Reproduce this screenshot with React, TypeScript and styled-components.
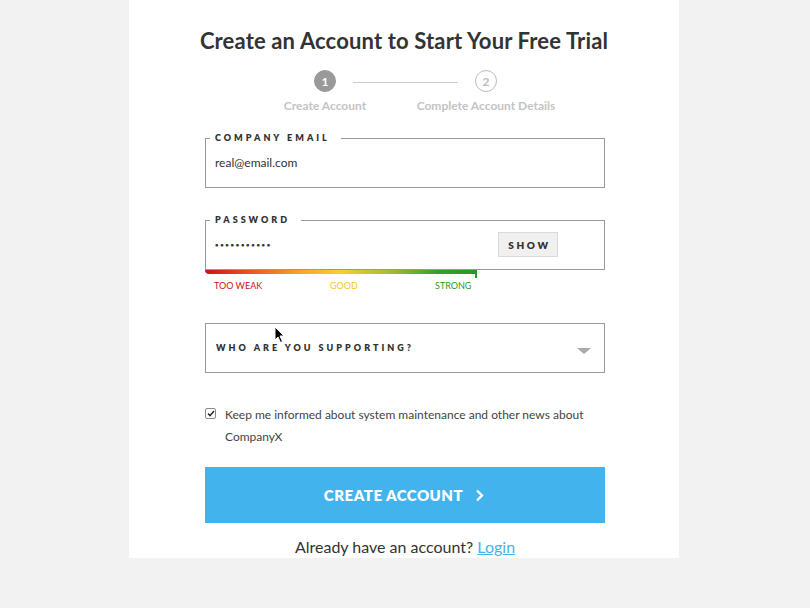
import React from "react";
import styled, { createGlobalStyle } from "styled-components";

const GlobalStyle = createGlobalStyle`
  html, body {
    margin: 0;
    padding: 0;
    background: #f2f2f2;
    font-family: Lato, "Open Sans", Arial, sans-serif;
  }
`;

const Page = styled.div`
  position: relative;
  width: 810px;
  height: 608px;
  overflow: hidden;
`;

const Card = styled.div`
  width: 550px;
  margin: 0 0 0 129px;
  background: #fff;
  padding: 28px 0 1px;
  box-sizing: border-box;
  display: flex;
  flex-direction: column;
  align-items: center;
`;

const Title = styled.h1`
  margin: 0;
  font-size: 22px;
  line-height: 26px;
  font-weight: 700;
  letter-spacing: 0.15px;
  color: #333;
`;

const Stepper = styled.div`
  display: flex;
  align-items: flex-start;
  margin: 16px 0 0 3px;
`;

const Step = styled.div`
  display: flex;
  flex-direction: column;
  align-items: center;
  width: 22px;
`;

const Circle = styled.div<{ $active?: boolean }>`
  width: 22px;
  height: 22px;
  border-radius: 50%;
  box-sizing: border-box;
  display: flex;
  align-items: center;
  justify-content: center;
  font-size: 12px;
  font-weight: 700;
  background: ${(p) => (p.$active ? "#999" : "#fff")};
  color: ${(p) => (p.$active ? "#fff" : "#bbb")};
  border: 1px solid ${(p) => (p.$active ? "#999" : "#bbb")};
`;

const StepLabel = styled.div`
  margin-top: 7px;
  font-size: 12px;
  line-height: 14px;
  font-weight: 700;
  color: #c4c4c4;
  white-space: nowrap;
`;

const Connector = styled.div`
  width: 105px;
  height: 1px;
  background: #ccc;
  margin: 12px 17px 0;
  flex: none;
`;

const Form = styled.div`
  width: 400px;
  display: flex;
  flex-direction: column;
  margin: 19px 0 0 2px;
`;

const Field = styled.fieldset<{ $gap?: number }>`
  margin: ${(p) => p.$gap ?? 0}px 0 0;
  padding: 0 0 6px 4px;
  border: 1px solid #999;
  min-width: 0;
`;

const Legend = styled.legend`
  padding: 0 11px 0 5px;
  font-size: 9px;
  line-height: 12px;
  font-weight: 800;
  letter-spacing: 3px;
  color: #333;
`;

const FieldRow = styled.div`
  height: 37px;
  display: flex;
  align-items: center;
  justify-content: space-between;
  padding-left: 5px;
`;

const Value = styled.span`
  font-size: 12px;
  color: #333;
`;

const Dots = styled.span`
  font-size: 6px;
  letter-spacing: 1.7px;
  color: #333;
  font-weight: 700;
`;

const ShowButton = styled.button`
  width: 60px;
  height: 25px;
  margin-right: 46px;
  background: #f0f0f0;
  border: 1px solid #dadada;
  font-family: inherit;
  font-size: 10px;
  font-weight: 800;
  letter-spacing: 2.6px;
  padding: 0 0 0 3px;
  color: #333;
`;

const MeterTrack = styled.div`
  position: relative;
  width: 272px;
  height: 4px;
  border-radius: 0 0 0 5px;
  background: linear-gradient(
    to right,
    #d0111b 0%,
    #ee5a1e 18%,
    #f6a528 35%,
    #f8cf2f 50%,
    #a6bd33 68%,
    #37a02a 85%,
    #249a22 100%
  );
`;

const MeterTick = styled.div`
  position: absolute;
  right: 0;
  top: 0;
  width: 2px;
  height: 8px;
  background: #249a22;
`;

const MeterLabels = styled.div`
  display: grid;
  grid-template-columns: 116px 105px auto;
  padding-left: 9px;
  margin-top: 6px;
  font-size: 9px;
  line-height: 12px;
`;

const MeterLabel = styled.span<{ $color: string }>`
  color: ${(p) => p.$color};
`;

const Select = styled.div`
  margin-top: 31px;
  height: 50px;
  box-sizing: border-box;
  border: 1px solid #999;
  display: flex;
  align-items: center;
  justify-content: space-between;
  padding: 0 13px 0 10px;
`;

const SelectText = styled.span`
  font-size: 9px;
  font-weight: 800;
  letter-spacing: 3px;
  color: #333;
  margin-top: -2px;
`;

const Caret = styled.span`
  width: 0;
  height: 0;
  border-left: 7px solid transparent;
  border-right: 7px solid transparent;
  border-top: 6px solid #aaa;
  margin-top: 6px;
`;

const CheckRow = styled.label`
  display: flex;
  align-items: flex-start;
  gap: 9px;
  margin-top: 31px;
`;

const Box = styled.span`
  width: 11px;
  height: 11px;
  flex: none;
  box-sizing: border-box;
  border: 1px solid #8a8a8a;
  border-radius: 2px;
  background: #fff;
  margin-top: 4px;
  display: flex;
  align-items: center;
  justify-content: center;
`;

const CheckText = styled.span`
  font-size: 12px;
  line-height: 22px;
  color: #444;
`;

const SubmitButton = styled.button`
  margin-top: 19px;
  height: 56px;
  border: none;
  background: #42b3ed;
  color: #fff;
  font-family: inherit;
  font-size: 15px;
  font-weight: 800;
  letter-spacing: 0.5px;
  display: flex;
  align-items: center;
  justify-content: center;
  gap: 12px;
  padding: 0 2px 0 0;
`;

const Footer = styled.div`
  margin-top: 14px;
  font-size: 16px;
  line-height: 20px;
  color: #333;
  text-align: center;
`;

const LoginLink = styled.a`
  color: #4ab2ea;
  text-decoration: underline;
`;

const Cursor = styled.svg`
  position: absolute;
  left: 274px;
  top: 326px;
`;

export default function App() {
  return (
    <Page>
      <GlobalStyle />
      <Card>
        <Title>Create an Account to Start Your Free Trial</Title>
        <Stepper>
          <Step>
            <Circle $active>1</Circle>
            <StepLabel>Create Account</StepLabel>
          </Step>
          <Connector />
          <Step>
            <Circle>2</Circle>
            <StepLabel>Complete Account Details</StepLabel>
          </Step>
        </Stepper>
        <Form>
          <Field>
            <Legend>COMPANY EMAIL</Legend>
            <FieldRow>
              <Value>real@email.com</Value>
            </FieldRow>
          </Field>
          <Field $gap={26}>
            <Legend>PASSWORD</Legend>
            <FieldRow>
              <Dots>•••••••••••</Dots>
              <ShowButton>SHOW</ShowButton>
            </FieldRow>
          </Field>
          <MeterTrack>
            <MeterTick />
          </MeterTrack>
          <MeterLabels>
            <MeterLabel $color="#d0111b">TOO WEAK</MeterLabel>
            <MeterLabel $color="#f5c52c">GOOD</MeterLabel>
            <MeterLabel $color="#2a9a22">STRONG</MeterLabel>
          </MeterLabels>
          <Select>
            <SelectText>WHO ARE YOU SUPPORTING?</SelectText>
            <Caret />
          </Select>
          <CheckRow>
            <Box>
              <svg width="8" height="7" viewBox="0 0 8 7">
                <path d="M1 3.6 L3 5.6 L7 1" fill="none" stroke="#222" strokeWidth="1.4" />
              </svg>
            </Box>
            <CheckText>
              Keep me informed about system maintenance and other news about
              <br />
              CompanyX
            </CheckText>
          </CheckRow>
          <SubmitButton>
            CREATE ACCOUNT
            <svg width="9" height="13" viewBox="0 0 9 13">
              <path d="M2 1.5 L7 6.5 L2 11.5" fill="none" stroke="#fff" strokeWidth="2.4" />
            </svg>
          </SubmitButton>
          <Footer>
            Already have an account? <LoginLink href="#">Login</LoginLink>
          </Footer>
        </Form>
      </Card>
      <Cursor width="12" height="18" viewBox="0 0 12 18">
        <path d="M1 1 L1 14 L4 11 L6.5 16.5 L8.5 15.5 L6 10 L10 10 Z" fill="#000" stroke="#fff" strokeWidth="1" />
      </Cursor>
    </Page>
  );
}
